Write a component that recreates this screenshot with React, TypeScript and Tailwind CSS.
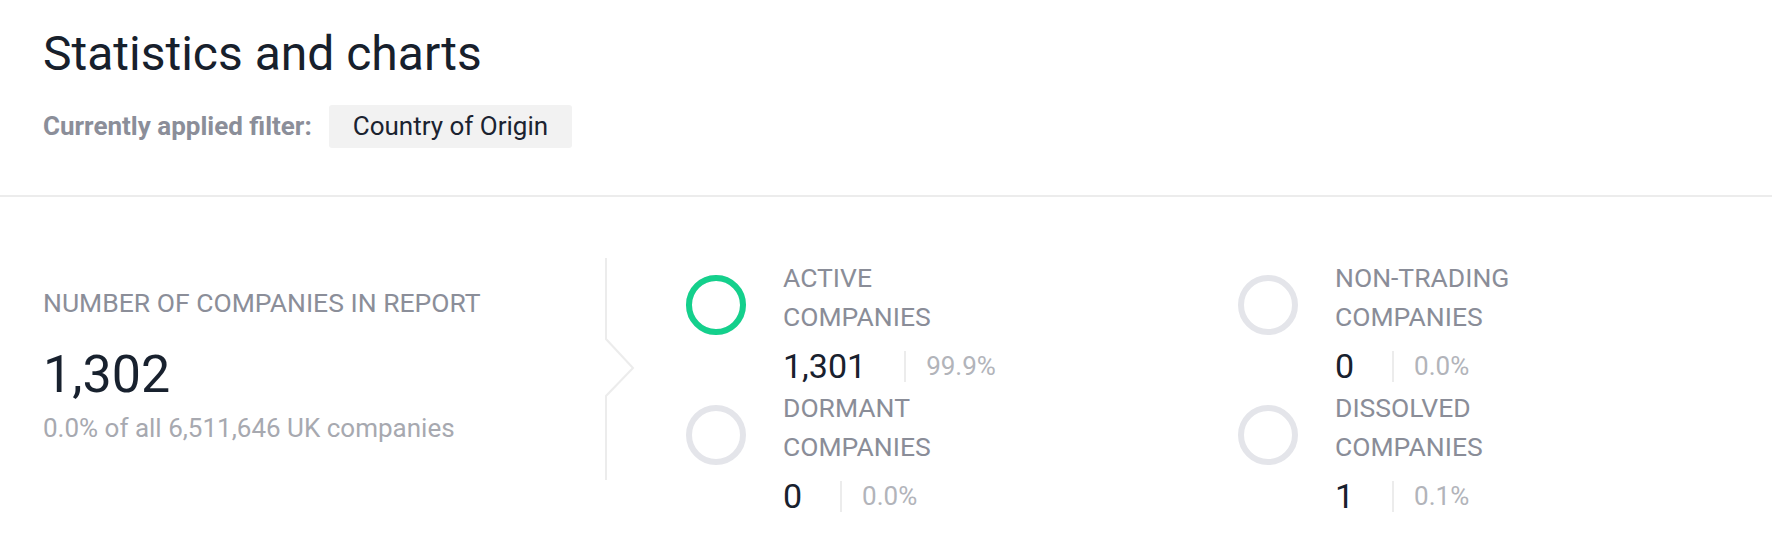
import React from "react";

type Stat = { label1: string; label2: string; value: string; pct: string; active?: boolean };

const stats: Stat[][] = [
  [
    { label1: "ACTIVE", label2: "COMPANIES", value: "1,301", pct: "99.9%", active: true },
    { label1: "DORMANT", label2: "COMPANIES", value: "0", pct: "0.0%" },
  ],
  [
    { label1: "NON-TRADING", label2: "COMPANIES", value: "0", pct: "0.0%" },
    { label1: "DISSOLVED", label2: "COMPANIES", value: "1", pct: "0.1%" },
  ],
];

function Ring({ active }: { active?: boolean }) {
  const r = 27;
  const c = 2 * Math.PI * r;
  return (
    <svg width="60" height="60" viewBox="0 0 60 60" className="shrink-0">
      <circle cx="30" cy="30" r={r} fill="none" stroke="#e4e5ea" strokeWidth="6" />
      {active && (
        <circle
          cx="30"
          cy="30"
          r={r}
          fill="none"
          stroke="#14d08c"
          strokeWidth="6"
          strokeDasharray={`${c - 0.6} ${c}`}
          transform="rotate(-89.4 30 30)"
        />
      )}
    </svg>
  );
}

function StatRow({ s }: { s: Stat }) {
  return (
    <div className="flex h-[130px]">
      <div className="mt-[17px]">
        <Ring active={s.active} />
      </div>
      <div className="ml-[37px] flex flex-col">
        <div className="text-[26.5px] leading-[39px] text-[#8a8d98]">{s.label1}</div>
        <div className="text-[26.5px] leading-[39px] text-[#8a8d98]">{s.label2}</div>
        <div className="mt-[11px] flex items-center h-[38px]">
          <span className="text-[34px] leading-[38px] text-[#18212e] pr-[38px]">{s.value}</span>
          <span className="w-[2px] h-[31px] bg-[#ececec]" />
          <span className="text-[26px] leading-[38px] text-[#b2b4ba] pl-[20px]">{s.pct}</span>
        </div>
      </div>
    </div>
  );
}

export default function App() {
  return (
    <div
      className="w-full h-[537px] bg-white overflow-hidden"
      style={{ fontFamily: "Roboto, 'Noto Sans', sans-serif" }}
    >
      <header className="pl-[43px] pt-[27px]">
        <h1 className="text-[48px] leading-[54px] font-normal text-[#17202c]">Statistics and charts</h1>
        <div className="flex items-center mt-[24px]">
          <span className="text-[26px] font-bold text-[#8b8e99]">Currently applied filter:</span>
          <span className="ml-[17px] h-[43px] px-[24px] bg-[#f2f2f2] rounded-[3px] flex items-center text-[26px] text-[#1b2330]">
            Country of Origin
          </span>
        </div>
      </header>
      <div className="mt-[47px] h-[2px] bg-[#ececec]" />
      <section className="flex pt-[61px]">
        <div className="w-[605px] shrink-0 pl-[43px] pt-[29px]">
          <div className="text-[26.5px] leading-[32px] text-[#8b8e99] whitespace-nowrap">NUMBER OF COMPANIES IN REPORT</div>
          <div className="mt-[26px] text-[52px] leading-[60px] text-[#18212e]">1,302</div>
          <div className="mt-[8px] text-[26px] leading-[30px] text-[#a7a9b0] whitespace-nowrap">0.0% of all 6,511,646 UK companies</div>
        </div>
        <svg width="32" height="222" viewBox="0 0 32 222" className="shrink-0">
          <path d="M1 0 V81 L28 110 L1 138 V222" fill="none" stroke="#ececec" strokeWidth="2" />
        </svg>
        <div className="ml-[49px] grid grid-cols-[552px_auto]">
          {stats.map((col, i) => (
            <div key={i} className="flex flex-col">
              {col.map((s) => (
                <StatRow key={s.label1} s={s} />
              ))}
            </div>
          ))}
        </div>
      </section>
    </div>
  );
}
